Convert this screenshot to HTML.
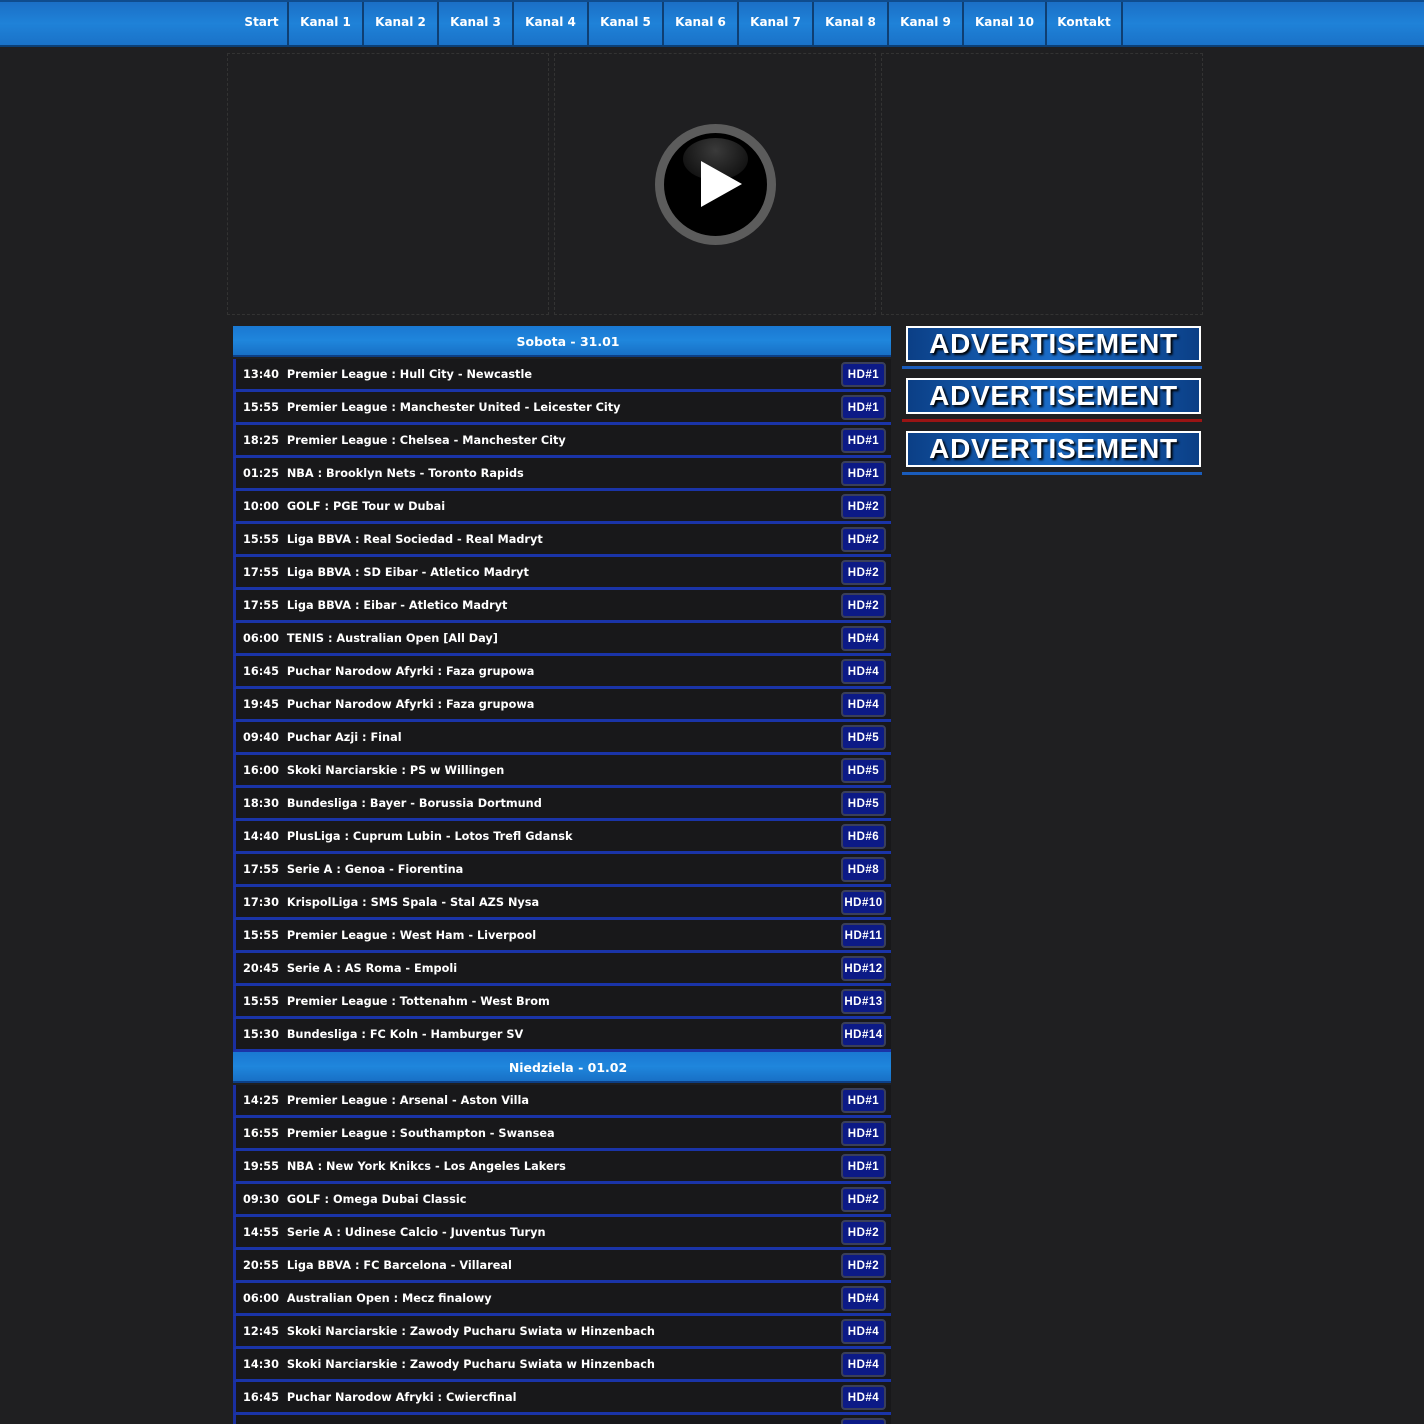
<!DOCTYPE html>
<html><head><meta charset="utf-8"><style>
*{margin:0;padding:0;box-sizing:border-box}
html,body{width:1424px;height:1424px;overflow:hidden}
body{background:#1f1f21;font-family:"DejaVu Sans","Liberation Sans",sans-serif;position:relative}
#nav{position:absolute;left:0;top:0;width:1424px;height:47px;background:linear-gradient(#1b6fc6,#1f82d8 50%,#1a72c8);border-top:2px solid #0f4c8e;border-bottom:2px solid #0b3f76}
#nav a{position:absolute;top:0;height:45px;line-height:40px;color:#fff;font-weight:bold;font-size:12px;text-align:center;border-right:2px solid #0f3f72;text-decoration:none}
.box{position:absolute;top:53px;height:262px;border:1px dashed #333;}
.play{position:absolute;left:655px;top:124px;width:121px;height:121px;border-radius:50%;background:#000;border:9px solid #5c5c5c}
.play .hl{position:absolute;left:19px;top:5px;width:65px;height:42px;border-radius:50%;background:radial-gradient(ellipse at 50% 30%,#3a3a3a,#111 80%,transparent 100%)}
.play .tri{position:absolute;left:37px;top:28px;width:0;height:0;border-left:41px solid #fff;border-top:23px solid transparent;border-bottom:23px solid transparent}
.hdr{position:absolute;left:233px;width:658px;height:31px;background:linear-gradient(#1a78d2,#1f86dc 50%,#1870c6);color:#fff;font-weight:bold;font-size:12.5px;text-align:center;line-height:31px;border-bottom:2px solid #0c3f86;padding-left:12px}
.row{position:absolute;left:233px;width:658px;height:33px;background:#18181a;border-left:3px solid #1a2fa0;border-bottom:3px solid #1a34a8;color:#fff;font-weight:bold;font-size:11.3px;line-height:30px;padding-top:1px;padding-left:7px;white-space:pre;overflow:hidden}
.row b{position:absolute;right:5px;top:3px;width:45px;height:25px;background:#0c1a86;border:2px solid #3a3f5a;border-radius:4px;font-family:"Liberation Sans",sans-serif;font-size:11.5px;line-height:23px;text-align:center;letter-spacing:0.5px;font-weight:900}
.ad{position:absolute;left:906px;width:295px;height:36px;border:2px solid #fff;background:linear-gradient(90deg,#0b3f86,#1a6cc8 50%,#0b3f86);color:#fff;font-family:"Liberation Sans",sans-serif;font-weight:900;font-size:28px;letter-spacing:0.7px;text-align:center;line-height:32px;text-shadow:2px 2px 2px #000}
.ln{position:absolute;left:902px;width:300px;height:3px}
</style></head><body>
<div id="nav">
<a style="left:233px;width:56px;padding-left:3px">Start</a>
<a style="left:289px;width:75px">Kanal 1</a>
<a style="left:364px;width:75px">Kanal 2</a>
<a style="left:439px;width:75px">Kanal 3</a>
<a style="left:514px;width:75px">Kanal 4</a>
<a style="left:589px;width:75px">Kanal 5</a>
<a style="left:664px;width:75px">Kanal 6</a>
<a style="left:739px;width:75px">Kanal 7</a>
<a style="left:814px;width:75px">Kanal 8</a>
<a style="left:889px;width:75px">Kanal 9</a>
<a style="left:964px;width:83px">Kanal 10</a>
<a style="left:1047px;width:76px">Kontakt</a>
</div>
<div class="box" style="left:227px;width:322px"></div>
<div class="box" style="left:554px;width:322px"></div>
<div class="box" style="left:881px;width:322px"></div>
<div class="play"><div class="hl"></div><div class="tri"></div></div>

<div class="ad" style="top:326px">ADVERTISEMENT</div>
<div class="ln" style="top:366px;background:#1a5cbc"></div>
<div class="ad" style="top:378px">ADVERTISEMENT</div>
<div class="ln" style="top:419px;background:#9a1414"></div>
<div class="ad" style="top:431px">ADVERTISEMENT</div>
<div class="ln" style="top:472px;background:#1a5cbc"></div>

<div class="hdr" style="top:326px">Sobota - 31.01</div>
<div class="row" style="top:359px">13:40  Premier League : Hull City - Newcastle<b>HD#1</b></div>
<div class="row" style="top:392px">15:55  Premier League : Manchester United - Leicester City<b>HD#1</b></div>
<div class="row" style="top:425px">18:25  Premier League : Chelsea - Manchester City<b>HD#1</b></div>
<div class="row" style="top:458px">01:25  NBA : Brooklyn Nets - Toronto Rapids<b>HD#1</b></div>
<div class="row" style="top:491px">10:00  GOLF : PGE Tour w Dubai<b>HD#2</b></div>
<div class="row" style="top:524px">15:55  Liga BBVA : Real Sociedad - Real Madryt<b>HD#2</b></div>
<div class="row" style="top:557px">17:55  Liga BBVA : SD Eibar - Atletico Madryt<b>HD#2</b></div>
<div class="row" style="top:590px">17:55  Liga BBVA : Eibar - Atletico Madryt<b>HD#2</b></div>
<div class="row" style="top:623px">06:00  TENIS : Australian Open [All Day]<b>HD#4</b></div>
<div class="row" style="top:656px">16:45  Puchar Narodow Afyrki : Faza grupowa<b>HD#4</b></div>
<div class="row" style="top:689px">19:45  Puchar Narodow Afyrki : Faza grupowa<b>HD#4</b></div>
<div class="row" style="top:722px">09:40  Puchar Azji : Final<b>HD#5</b></div>
<div class="row" style="top:755px">16:00  Skoki Narciarskie : PS w Willingen<b>HD#5</b></div>
<div class="row" style="top:788px">18:30  Bundesliga : Bayer - Borussia Dortmund<b>HD#5</b></div>
<div class="row" style="top:821px">14:40  PlusLiga : Cuprum Lubin - Lotos Trefl Gdansk<b>HD#6</b></div>
<div class="row" style="top:854px">17:55  Serie A : Genoa - Fiorentina<b>HD#8</b></div>
<div class="row" style="top:887px">17:30  KrispolLiga : SMS Spala - Stal AZS Nysa<b>HD#10</b></div>
<div class="row" style="top:920px">15:55  Premier League : West Ham - Liverpool<b>HD#11</b></div>
<div class="row" style="top:953px">20:45  Serie A : AS Roma - Empoli<b>HD#12</b></div>
<div class="row" style="top:986px">15:55  Premier League : Tottenahm - West Brom<b>HD#13</b></div>
<div class="row" style="top:1019px">15:30  Bundesliga : FC Koln - Hamburger SV<b>HD#14</b></div>
<div class="hdr" style="top:1052px">Niedziela - 01.02</div>
<div class="row" style="top:1085px">14:25  Premier League : Arsenal - Aston Villa<b>HD#1</b></div>
<div class="row" style="top:1118px">16:55  Premier League : Southampton - Swansea<b>HD#1</b></div>
<div class="row" style="top:1151px">19:55  NBA : New York Knikcs - Los Angeles Lakers<b>HD#1</b></div>
<div class="row" style="top:1184px">09:30  GOLF : Omega Dubai Classic<b>HD#2</b></div>
<div class="row" style="top:1217px">14:55  Serie A : Udinese Calcio - Juventus Turyn<b>HD#2</b></div>
<div class="row" style="top:1250px">20:55  Liga BBVA : FC Barcelona - Villareal<b>HD#2</b></div>
<div class="row" style="top:1283px">06:00  Australian Open : Mecz finalowy<b>HD#4</b></div>
<div class="row" style="top:1316px">12:45  Skoki Narciarskie : Zawody Pucharu Swiata w Hinzenbach<b>HD#4</b></div>
<div class="row" style="top:1349px">14:30  Skoki Narciarskie : Zawody Pucharu Swiata w Hinzenbach<b>HD#4</b></div>
<div class="row" style="top:1382px">16:45  Puchar Narodow Afryki : Cwiercfinal<b>HD#4</b></div>
<div class="row" style="top:1415px;height:9px;border-bottom:0"><b>HD#4</b></div>
</body></html>
